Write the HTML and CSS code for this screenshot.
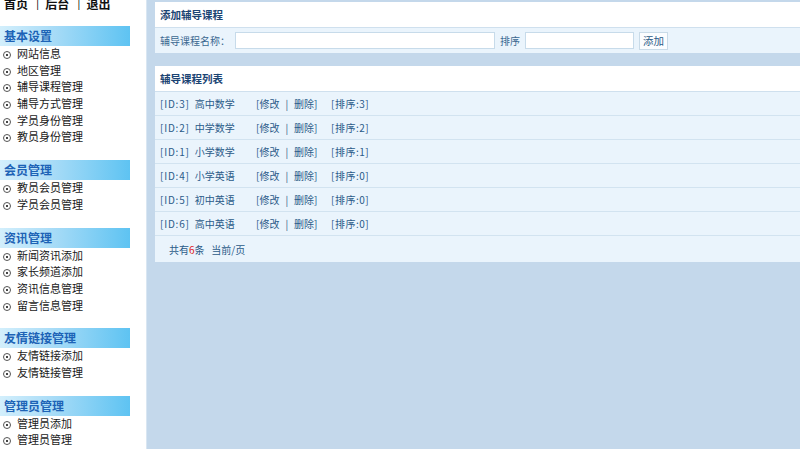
FILE: index.html
```html
<!DOCTYPE html>
<html lang="zh-CN">
<head>
<meta charset="utf-8">
<title>辅导课程管理</title>
<link rel="stylesheet" href="styles.css">
</head>
<body>
<div class="layout">
  <aside class="sidebar">
    <div class="topnav"><span>首页</span><i>|</i><span>后台</span><i>|</i><span>退出</span></div>
    <div class="menu">
      <div class="menu-title">基本设置</div>
      <ul>
        <li>网站信息</li>
        <li>地区管理</li>
        <li>辅导课程管理</li>
        <li>辅导方式管理</li>
        <li>学员身份管理</li>
        <li>教员身份管理</li>
      </ul>
    </div>
    <div class="menu">
      <div class="menu-title">会员管理</div>
      <ul>
        <li>教员会员管理</li>
        <li>学员会员管理</li>
      </ul>
    </div>
    <div class="menu">
      <div class="menu-title">资讯管理</div>
      <ul>
        <li>新闻资讯添加</li>
        <li>家长频道添加</li>
        <li>资讯信息管理</li>
        <li>留言信息管理</li>
      </ul>
    </div>
    <div class="menu">
      <div class="menu-title">友情链接管理</div>
      <ul>
        <li>友情链接添加</li>
        <li>友情链接管理</li>
      </ul>
    </div>
    <div class="menu">
      <div class="menu-title">管理员管理</div>
      <ul>
        <li>管理员添加</li>
        <li>管理员管理</li>
      </ul>
    </div>
  </aside>
  <main class="main">
    <section class="panel">
      <div class="panel-head">添加辅导课程</div>
      <div class="row form-row">
        <label class="lbl-name">辅导课程名称：</label>
        <input class="inp inp-name" type="text">
        <label class="lbl-sort">排序</label>
        <input class="inp inp-sort" type="text">
        <button class="btn" type="button">添加</button>
      </div>
    </section>
    <section class="panel panel-list">
      <div class="panel-head">辅导课程列表</div>
      <div class="row"><span class="c1"><span class="id">[ID:3]</span>高中数学</span><span class="c2">[修改<span class="sep">|</span>删除]</span><span class="ord">[排序:3]</span></div>
      <div class="row"><span class="c1"><span class="id">[ID:2]</span>中学数学</span><span class="c2">[修改<span class="sep">|</span>删除]</span><span class="ord">[排序:2]</span></div>
      <div class="row"><span class="c1"><span class="id">[ID:1]</span>小学数学</span><span class="c2">[修改<span class="sep">|</span>删除]</span><span class="ord">[排序:1]</span></div>
      <div class="row"><span class="c1"><span class="id">[ID:4]</span>小学英语</span><span class="c2">[修改<span class="sep">|</span>删除]</span><span class="ord">[排序:0]</span></div>
      <div class="row"><span class="c1"><span class="id">[ID:5]</span>初中英语</span><span class="c2">[修改<span class="sep">|</span>删除]</span><span class="ord">[排序:0]</span></div>
      <div class="row"><span class="c1"><span class="id">[ID:6]</span>高中英语</span><span class="c2">[修改<span class="sep">|</span>删除]</span><span class="ord">[排序:0]</span></div>
      <div class="row foot">共有<b class="num">6</b>条&nbsp;&nbsp;&nbsp;当前/页</div>
    </section>
  </main>
</div>
</body>
</html>
```

FILE: styles.css
```css
* { box-sizing: border-box; }
html, body { margin: 0; padding: 0; height: 100%; }
body {
  font-family: "Noto Sans CJK SC", "Noto Sans", sans-serif;
  font-size: 11px;
  color: #222;
  background: #c4d8eb;
  overflow: hidden;
}
.layout { display: flex; height: 449px; }

.sidebar {
  width: 146px;
  flex: none;
  background: #fff;
}
.topnav {
  height: 10px;
  overflow: hidden;
  display: flex;
  align-items: flex-end;
  padding-left: 4px;
  font-weight: bold;
  font-size: 12px;
  line-height: 13px;
  color: #111;
}
.topnav i { font-style: normal; font-weight: normal; padding: 0 6px 0 8px; }
.menu { margin-top: 16px; }
.menu + .menu { margin-top: 14px; }
.menu-title {
  width: 130px;
  height: 20px;
  line-height: 20px;
  padding-left: 4px;
  font-weight: bold;
  font-size: 12px;
  color: #1d63b6;
  background: linear-gradient(to right, #d3effc 0%, #a9dcf7 40%, #5ec3f2 100%);
}
.menu ul { list-style: none; margin: 0; padding: 0; }
.menu li {
  position: relative;
  height: 16.7px;
  line-height: 15px;
  padding-left: 17px;
  font-size: 11px;
  color: #1a1a1a;
}
.menu li::before {
  content: "";
  position: absolute;
  left: 3px;
  top: 5px;
  width: 6px;
  height: 6px;
  border: 1px solid #555;
  border-radius: 50%;
  background: radial-gradient(circle, #444 0 1px, transparent 1.3px);
}

.main {
  flex: 1;
  border-left: 1px solid #d9e6f2;
  padding: 2px 0 0 8px;
}
.panel { background: #eaf4fc; }
.panel-list { margin-top: 13px; }
.panel-head {
  height: 26px;
  line-height: 25px;
  padding-left: 5px;
  background: #fff;
  border-bottom: 1px solid #cfe0ee;
  font-weight: bold;
  font-size: 10.5px;
  color: #1b4473;
}
.row {
  height: 24px;
  display: flex;
  align-items: center;
  padding-left: 5px;
  border-bottom: 1px solid #d2e3f0;
  font-size: 10px;
  color: #2b5b89;
  white-space: nowrap;
}
.row .c1 { width: 96px; }
.row .c2 { width: 75px; }
.row .id { letter-spacing: 0.8px; margin-right: 5px; }
.row .sep { margin: 0 6px; }
.row .ord { letter-spacing: 0.5px; }
.form-row { height: 25px; border-bottom: none; color: #3b6891; }
.lbl-name { margin-right: 5px; }
.lbl-sort { margin-right: 5px; }
.inp {
  height: 17px;
  border: 1px solid #c7dbea;
  background: #fff;
  padding: 0;
  margin: 0 5px 0 0;
}
.inp-name { width: 260px; }
.inp-sort { width: 109px; margin-right: 5px; }
.btn {
  height: 18px;
  padding: 0 3px;
  border: 1px solid #c9dbe8;
  background: #fbfdff;
  color: #2c5a86;
  font-family: inherit;
  font-size: 10.5px;
  line-height: 15px;
}
.foot { padding-left: 14px; height: 26px; border-bottom: none; }
.num { color: #e02020; font-weight: normal; }
```
